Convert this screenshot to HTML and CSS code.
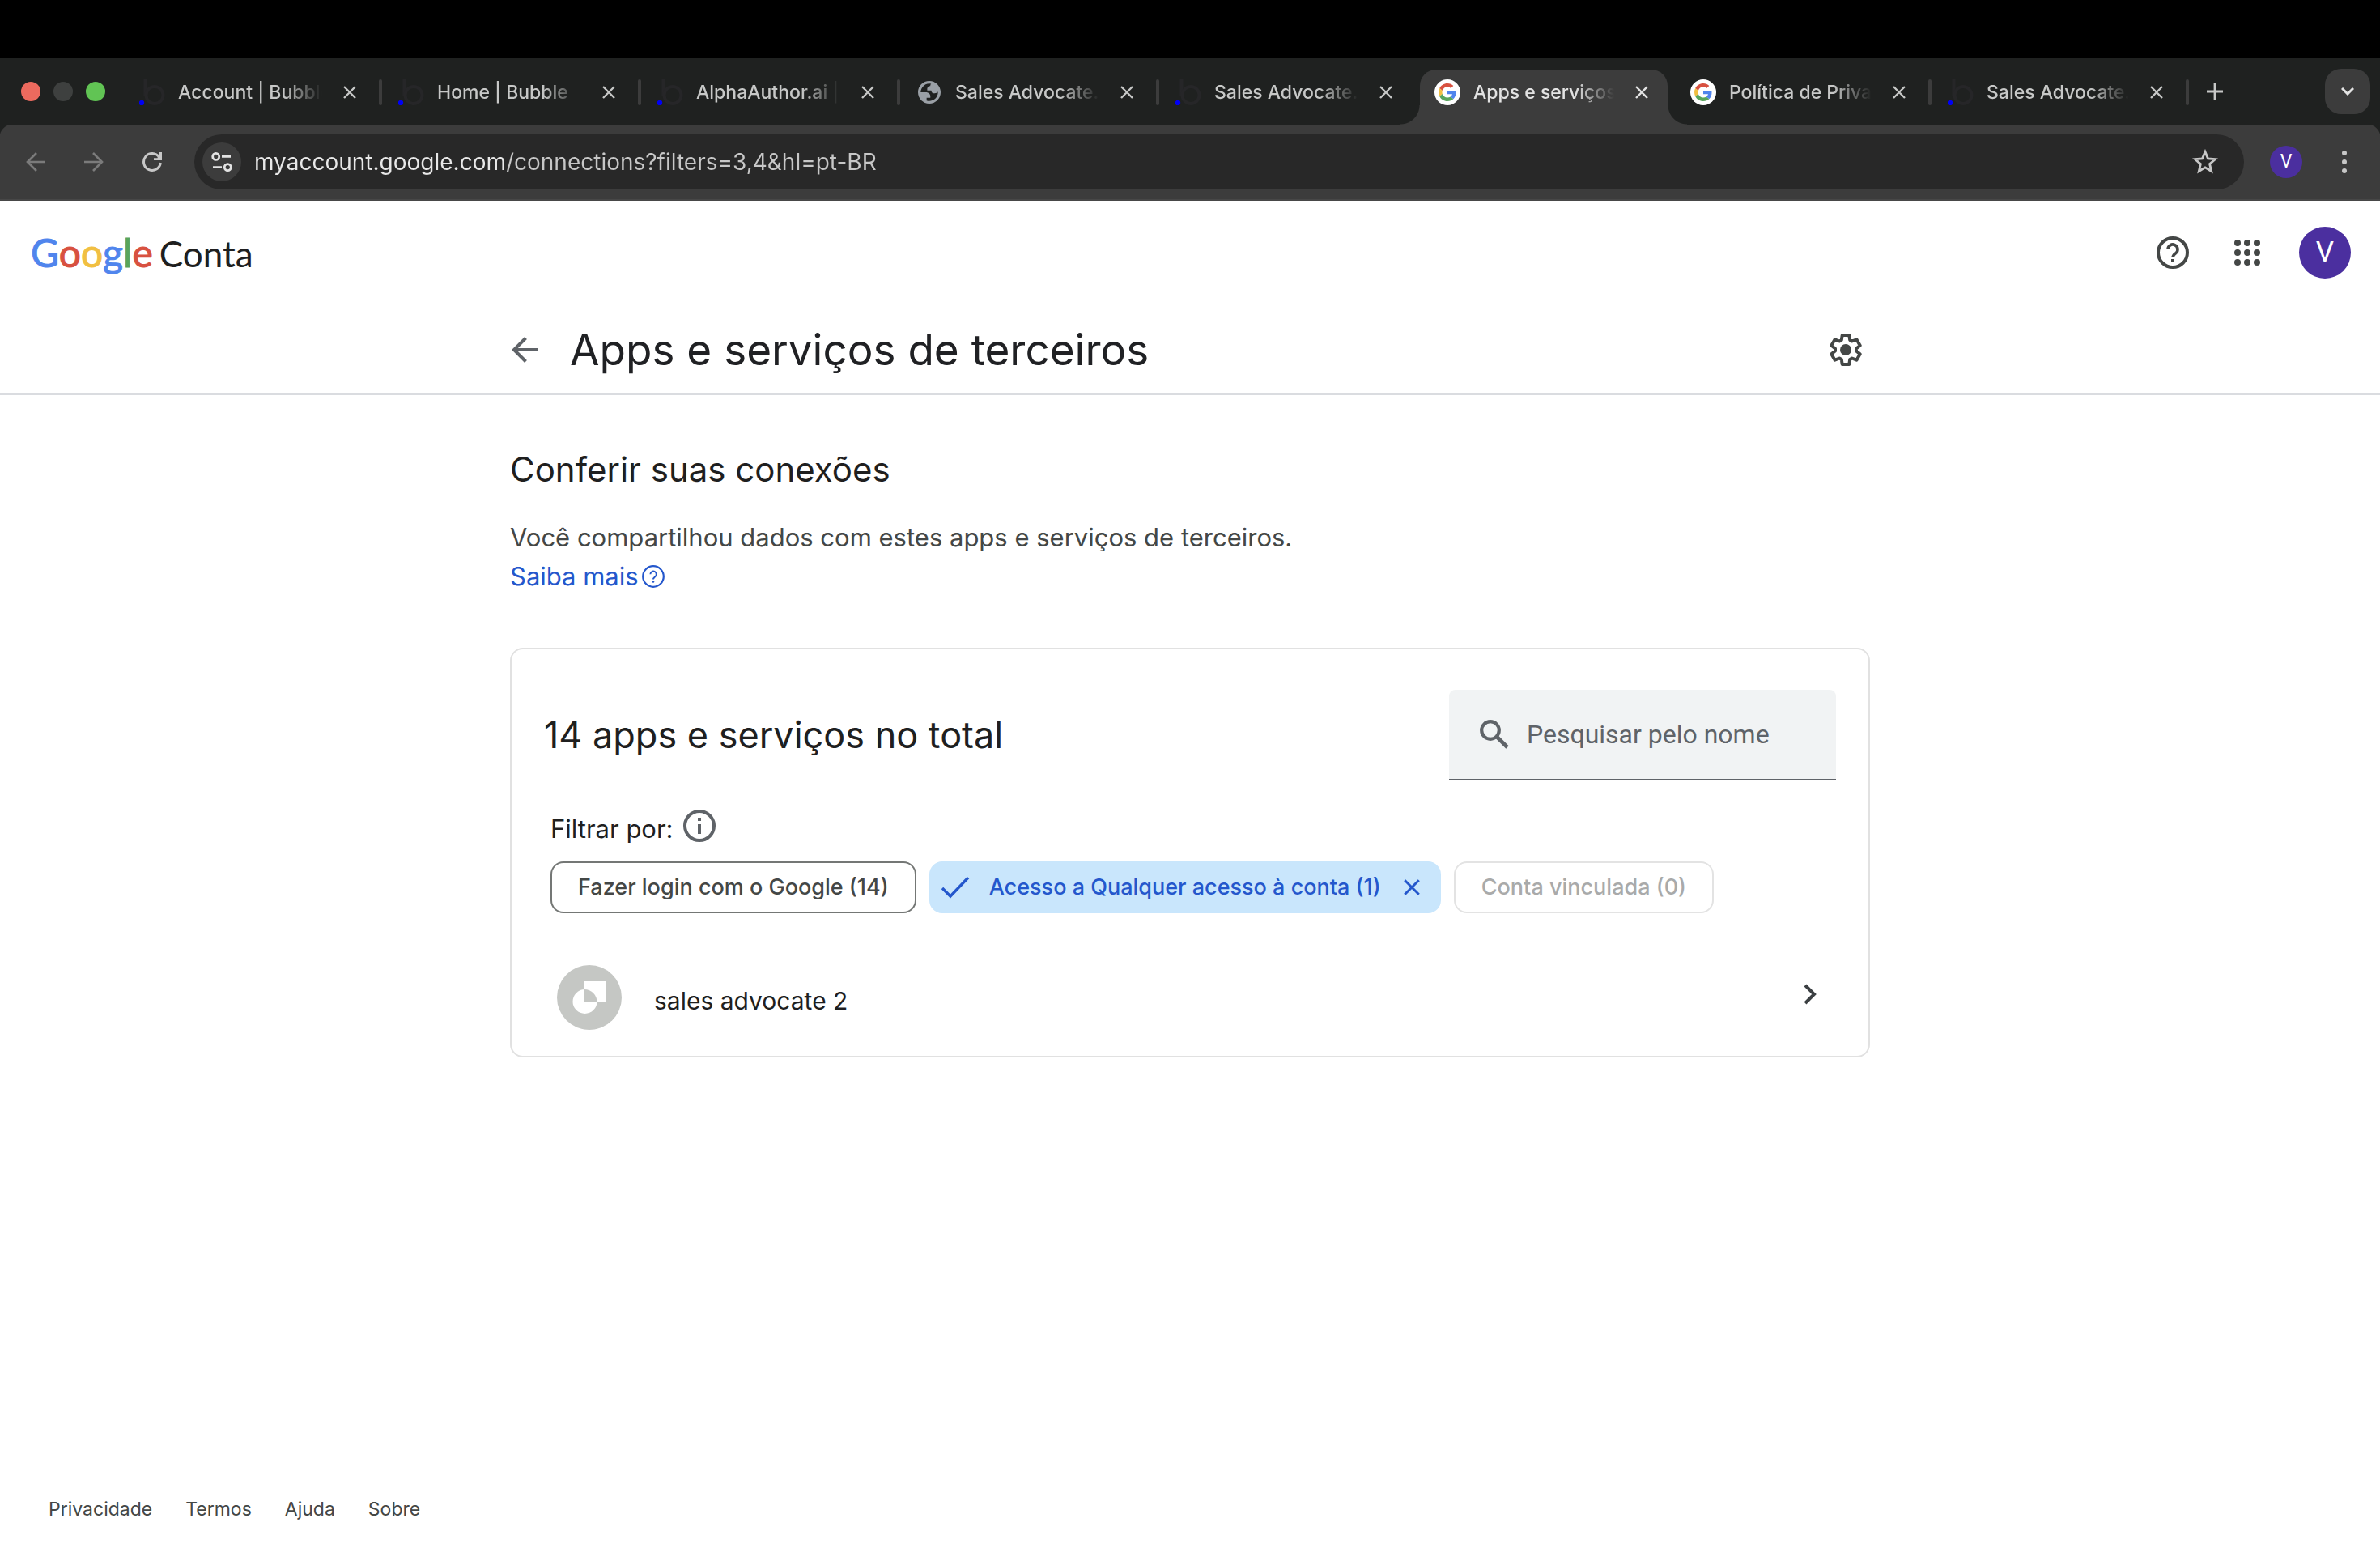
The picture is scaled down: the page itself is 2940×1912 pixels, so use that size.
FILE: index.html
```html
<!DOCTYPE html>
<html lang="pt-BR">
<head>
<meta charset="utf-8">
<meta name="viewport" content="width=device-width, initial-scale=1">
<title>Apps e serviços de terceiros</title>
<link rel="stylesheet" href="styles.css">
</head>
<body>
<svg class="sprite" aria-hidden="true">
  <symbol id="bubble" viewBox="0 0 32 32">
    <path d="M7.500 0v20" fill="none" stroke="#262628" stroke-width="4"/>
    <circle cx="19" cy="19.500" r="10.500" fill="none" stroke="#262628" stroke-width="4"/>
    <circle cx="3" cy="29" r="3.200" fill="#0000f5"/>
  </symbol>
  <symbol id="globe" viewBox="0 0 24 24">
    <path fill="#9aa0a6" fill-rule="evenodd" d="M12 1.500C6.200 1.500 1.500 6.200 1.500 12S6.200 22.500 12 22.500 22.500 17.800 22.500 12 17.800 1.500 12 1.500zM4 12h4.400c3.407.022 4.922 1.730 4.543 5.127H9.488v2.470a8.004 8.004 0 0 0 10.498-8.080C19.327 12.511 18.332 13 17 13c-2.137 0-3.206-.916-3.206-2.750h-3.748c-.274-2.728.683-4.092 2.870-4.092 0-.975.327-1.597.811-1.970A8.004 8.004 0 0 0 4 12z"/>
  </symbol>
  <symbol id="google-g" viewBox="-11 -11 70 70">
    <circle cx="24" cy="24" r="35" fill="#fff"/>
    <path fill="#d85140" d="M24 9.500c3.540 0 6.710 1.220 9.210 3.600l6.850-6.850C35.900 2.380 30.470 0 24 0 14.620 0 6.510 5.380 2.560 13.220l7.980 6.190C12.430 13.720 17.740 9.500 24 9.500z"/>
    <path fill="#5085ed" d="M46.980 24.550c0-1.570-.15-3.090-.38-4.550H24v9.020h12.940c-.58 2.960-2.260 5.480-4.780 7.180l7.730 6c4.510-4.180 7.090-10.360 7.090-17.650z"/>
    <path fill="#f1bf42" d="M10.530 28.590c-.48-1.450-.76-2.990-.76-4.590s.27-3.140.76-4.590l-7.980-6.190C.92 16.460 0 20.120 0 24c0 3.880.92 7.540 2.560 10.780l7.970-6.190z"/>
    <path fill="#58a55c" d="M24 48c6.480 0 11.930-2.130 15.890-5.810l-7.730-6c-2.150 1.450-4.920 2.300-8.160 2.300-6.260 0-11.570-4.220-13.470-9.910l-7.980 6.190C6.510 42.620 14.620 48 24 48z"/>
  </symbol>
  <symbol id="cross" viewBox="0 0 16 16">
    <path d="M1 1l14 14M15 1L1 15" fill="none" stroke="currentColor" stroke-width="2.400"/>
  </symbol>
  <symbol id="question" viewBox="0 0 40 40">
    <circle cx="20" cy="20" r="18" fill="none" stroke="currentColor" stroke-width="4"/>
    <path d="M14 16a6 6 0 1 1 9.800 4.600C21.600 22.300 20 23.400 20 26" fill="none" stroke="currentColor" stroke-width="3.600"/>
    <rect x="18" y="28" width="4" height="4" fill="currentColor"/>
  </symbol>
  <symbol id="question-thin" viewBox="0 0 28 28">
    <circle cx="14" cy="14" r="12.800" fill="none" stroke="currentColor" stroke-width="2.200"/>
    <path d="M10.400 11.300a3.700 3.700 0 1 1 6.100 2.800C15 15.300 14 16 14 17.600" fill="none" stroke="currentColor" stroke-width="1.900"/>
    <circle cx="14" cy="20.500" r="1.300" fill="currentColor"/>
  </symbol>
</svg>

<div class="screen-top"></div>
<div class="tab-strip">
  <div class="lights"><i class="light red"></i><i class="light grey"></i><i class="light green"></i></div>
  <div class="tabs">
    <div class="tab"><svg class="favicon"><use href="#bubble"/></svg><span class="tab-title">Account | Bubble</span><button class="tab-close" aria-label="Fechar"><svg><use href="#cross"/></svg></button></div>
    <div class="tab"><svg class="favicon"><use href="#bubble"/></svg><span class="tab-title">Home | Bubble</span><button class="tab-close" aria-label="Fechar"><svg><use href="#cross"/></svg></button></div>
    <div class="tab"><svg class="favicon"><use href="#bubble"/></svg><span class="tab-title">AlphaAuthor.ai |</span><button class="tab-close" aria-label="Fechar"><svg><use href="#cross"/></svg></button></div>
    <div class="tab"><svg class="favicon"><use href="#globe"/></svg><span class="tab-title">Sales Advocate.</span><button class="tab-close" aria-label="Fechar"><svg><use href="#cross"/></svg></button></div>
    <div class="tab before-active"><svg class="favicon"><use href="#bubble"/></svg><span class="tab-title">Sales Advocate.</span><button class="tab-close" aria-label="Fechar"><svg><use href="#cross"/></svg></button></div>
    <div class="tab active"><svg class="favicon"><use href="#google-g"/></svg><span class="tab-title">Apps e serviços</span><button class="tab-close" aria-label="Fechar"><svg><use href="#cross"/></svg></button></div>
    <div class="tab"><svg class="favicon"><use href="#google-g"/></svg><span class="tab-title">Política de Priva</span><button class="tab-close" aria-label="Fechar"><svg><use href="#cross"/></svg></button></div>
    <div class="tab"><svg class="favicon"><use href="#bubble"/></svg><span class="tab-title">Sales Advocate.</span><button class="tab-close" aria-label="Fechar"><svg><use href="#cross"/></svg></button></div>
  </div>
  <button class="new-tab" aria-label="Nova guia"><svg viewBox="0 0 20 20"><path d="M10 0v20M0 10h20" stroke="currentColor" stroke-width="2.800"/></svg></button>
  <button class="tab-search" aria-label="Pesquisar guias"><svg viewBox="0 0 16 10"><path d="M1 1l7 7 7-7" fill="none" stroke="currentColor" stroke-width="3"/></svg></button>
</div>

<div class="toolbar">
  <button class="nav-button dim" aria-label="Voltar"><svg viewBox="0 0 24 24"><path d="M24 12H2M13 1L2 12l11 11" fill="none" stroke="currentColor" stroke-width="2.600"/></svg></button>
  <button class="nav-button dim" aria-label="Avançar"><svg viewBox="0 0 24 24"><path d="M0 12h22M11 1l11 11-11 11" fill="none" stroke="currentColor" stroke-width="2.600"/></svg></button>
  <button class="nav-button" aria-label="Recarregar"><svg viewBox="0 0 24 24"><path d="M22.300 13A10.400 10.400 0 1 1 20.500 6" fill="none" stroke="currentColor" stroke-width="3"/><path d="M20.800 0H24v10H14V7.200h4.500z" fill="currentColor"/></svg></button>
  <div class="address">
    <button class="site-info" aria-label="Informações do site"><svg viewBox="0 0 48 48"><g fill="none" stroke="currentColor" stroke-width="2.800"><circle cx="16.700" cy="17.400" r="4"/><path d="M24 17.400h11M13 30.600h11"/><circle cx="31.300" cy="30.600" r="4"/></g></svg></button>
    <input class="url" type="text" aria-label="Endereço" value="myaccount.google.com/connections?filters=3,4&amp;hl=pt-BR">
    <button class="star" aria-label="Favoritar"><svg viewBox="0 0 32 32"><path d="M16 3.500l3.500 8.400 9 .8-6.900 5.900 2.100 8.900-7.700-4.700-7.700 4.700 2.100-8.900-6.900-5.900 9-.8z" fill="none" stroke="currentColor" stroke-width="2.800"/></svg></button>
  </div>
  <button class="profile" aria-label="Perfil">V</button>
  <button class="menu" aria-label="Menu"><svg viewBox="0 0 6 28"><g fill="currentColor"><circle cx="3" cy="3" r="3"/><circle cx="3" cy="14" r="3"/><circle cx="3" cy="25" r="3"/></g></svg></button>
</div>

<div class="page">
  <header class="account-bar">
    <a class="brand" href="#"><span class="google"><span class="b">G</span><span class="r">o</span><span class="y">o</span><span class="b">g</span><span class="g">l</span><span class="r">e</span></span><span class="conta">Conta</span></a>
    <div class="account-actions">
      <button class="help" aria-label="Ajuda"><svg><use href="#question"/></svg></button>
      <button class="apps" aria-label="Google Apps"><svg viewBox="0 0 32 32"><g fill="currentColor"><circle cx="4" cy="4" r="4"/><circle cx="16" cy="4" r="4"/><circle cx="28" cy="4" r="4"/><circle cx="4" cy="16" r="4"/><circle cx="16" cy="16" r="4"/><circle cx="28" cy="16" r="4"/><circle cx="4" cy="28" r="4"/><circle cx="16" cy="28" r="4"/><circle cx="28" cy="28" r="4"/></g></svg></button>
      <button class="avatar" aria-label="Conta do Google">V</button>
    </div>
  </header>

  <div class="title-bar">
    <div class="title-inner">
      <button class="back" aria-label="Voltar"><svg viewBox="0 0 32 32"><path d="M32 16H3M17.500 1.500L3 16l14.500 14.500" fill="none" stroke="currentColor" stroke-width="4"/></svg></button>
      <h1>Apps e serviços de terceiros</h1>
      <button class="settings" aria-label="Configurações"><svg viewBox="-20 -20 40 40"><path fill="none" stroke="currentColor" stroke-width="4" stroke-linejoin="round" d="M-4.300-18H4.300L5.200-12 7.800-10.500 13.400-12.700 17.700-5.300 13-1.500V1.500L17.700 5.300 13.400 12.700 7.800 10.500 5.200 12 4.300 18H-4.300L-5.200 12-7.800 10.500-13.400 12.700-17.700 5.300-13 1.500V-1.500L-17.700-5.300-13.400-12.700-7.800-10.500-5.200-12z"/><circle r="7" fill="currentColor"/></svg></button>
    </div>
  </div>

  <main>
    <h2 class="intro-title">Conferir suas conexões</h2>
    <p class="intro">Você compartilhou dados com estes apps e serviços de terceiros.<br><a class="learn-more" href="#">Saiba mais <svg><use href="#question-thin"/></svg></a></p>

    <section class="card">
      <div class="card-head">
        <h2>14 apps e serviços no total</h2>
        <label class="search">
          <svg viewBox="0 0 36 36"><circle cx="13" cy="13" r="10.800" fill="none" stroke="currentColor" stroke-width="4.200"/><path d="M21 21l13 13" stroke="currentColor" stroke-width="4.800"/></svg>
          <input type="text" placeholder="Pesquisar pelo nome" aria-label="Pesquisar pelo nome">
        </label>
      </div>
      <div class="filter-label">
        <span>Filtrar por:</span>
        <button class="info" aria-label="Informações"><svg viewBox="0 0 40 40"><circle cx="20" cy="20" r="18" fill="none" stroke="currentColor" stroke-width="4"/><path d="M20 18v12M20 10v4" stroke="currentColor" stroke-width="4"/></svg></button>
      </div>
      <div class="chips">
        <button class="chip">Fazer login com o Google (14)</button>
        <button class="chip selected"><svg class="check" viewBox="0 0 36 28"><path d="M2 15l10 10L34 2" fill="none" stroke="currentColor" stroke-width="3.400"/></svg><span>Acesso a Qualquer acesso à conta (1)</span><svg class="clear"><use href="#cross"/></svg></button>
        <button class="chip" disabled>Conta vinculada (0)</button>
      </div>
      <a class="app-row" href="#">
        <svg class="app-logo" viewBox="0 0 80 80"><circle cx="40" cy="40" r="40" fill="#c5c7c4"/><path fill="#fff" d="M34 20h26v26H34z"/><circle cx="34.500" cy="45" r="15" fill="#fff"/><path fill="#c5c7c4" d="M34 30a15.500 15.500 0 0 1 15.500 16H34z"/></svg>
        <span class="app-name">sales advocate 2</span>
        <svg class="chevron" viewBox="0 0 16 26"><path d="M2 2l11 11L2 24" fill="none" stroke="currentColor" stroke-width="4"/></svg>
      </a>
    </section>
  </main>

  <footer>
    <a href="#">Privacidade</a>
    <a href="#">Termos</a>
    <a href="#">Ajuda</a>
    <a href="#">Sobre</a>
  </footer>
</div>
</body>
</html>
```
FILE: styles.css
```css
* { box-sizing: border-box; }
body {
  margin: 0;
  min-height: 100vh;
  display: flex;
  flex-direction: column;
  background: #fff;
  color: #1f1f1f;
  font-family: Inter, "Liberation Sans", sans-serif;
}
button {
  display: flex;
  align-items: center;
  justify-content: center;
  padding: 0;
  border: 0;
  background: none;
  color: inherit;
  font: inherit;
}
a { color: inherit; text-decoration: none; }
h1, h2, p { margin: 0; font-weight: 400; }
svg { display: block; flex: none; }
.sprite { display: none; }

/* Browser frame */
.screen-top { height: 72px; background: #000; }
.tab-strip {
  display: flex;
  align-items: center;
  height: 82px;
  padding: 0 12px 0 26px;
  background: #1f2120;
  color: #c7c8c7;
}
.lights { display: flex; gap: 16px; margin-right: 24px; }
.light { width: 24px; height: 24px; border-radius: 50%; }
.red { background: #ec6a5e; }
.grey { background: #3e403f; }
.green { background: #61c454; }
.tabs { display: flex; flex: 0 1 2552px; min-width: 0; align-self: stretch; align-items: flex-end; }
.tab {
  position: relative;
  display: flex;
  align-items: center;
  flex: 0 1 320px;
  min-width: 0;
  height: 68px;
  padding: 0 30px 12px 18px;
}
.tab:nth-child(n+6) { flex-basis: 318px; }
.tab::after {
  content: "";
  position: absolute;
  right: 2px;
  top: 12px;
  width: 4px;
  height: 32px;
  border-radius: 2px;
  background: #3c3c3c;
}
.tab.before-active::after { display: none; }
.tab.active {
  flex-basis: 306px;
  margin-right: 10px;
  padding-right: 20px;
  border-radius: 20px 20px 0 0;
  background: #3c3c3c;
  color: #e3e3e3;
}
.tab.active::before, .tab.active::after {
  content: "";
  position: absolute;
  top: auto;
  bottom: 0;
  width: 24px;
  height: 24px;
  border-radius: 0;
}
.tab.active::before { left: -24px; background: radial-gradient(circle at 0 0, transparent 23px, #3c3c3c 24px); }
.tab.active::after { right: -24px; background: radial-gradient(circle at 100% 0, transparent 23px, #3c3c3c 24px); }
.favicon { width: 32px; height: 32px; }
.tab-title {
  flex: 1;
  min-width: 0;
  margin: 0 22px 0 16px;
  overflow: hidden;
  white-space: nowrap;
  font-size: 23px;
  font-weight: 500;
  line-height: 32px;
  -webkit-mask-image: linear-gradient(to right, #000 calc(100% - 48px), transparent);
  mask-image: linear-gradient(to right, #000 calc(100% - 48px), transparent);
}
.tab-close { width: 24px; height: 24px; }
.tab-close svg { width: 16px; height: 16px; }
.new-tab { width: 40px; height: 40px; margin-left: 10px; }
.new-tab svg { width: 20px; height: 20px; }
.tab-search {
  width: 56px;
  height: 56px;
  margin-left: auto;
  border-radius: 20px;
  background: #3c3c3c;
  color: #e3e3e3;
}
.tab-search svg { width: 16px; height: 10px; }

.toolbar {
  display: flex;
  align-items: center;
  height: 94px;
  padding: 0 24px 0 20px;
  border-bottom: 2px solid #474747;
  background: radial-gradient(circle at 16px 16px, #3c3c3c 16px, #1f2120 17px) 0 0 / 16px 16px no-repeat,
    radial-gradient(circle at 0 16px, #3c3c3c 16px, #1f2120 17px) 100% 0 / 16px 16px no-repeat, #3c3c3c;
  color: #c7c7c7;
}
.nav-button { width: 48px; height: 48px; margin-right: 24px; }
.nav-button svg { width: 24px; height: 24px; }
.dim { color: #7b7b7b; }
.address {
  display: flex;
  align-items: center;
  flex: 1;
  height: 68px;
  margin: 0 32px 0 4px;
  padding: 0 32px 0 10px;
  border-radius: 34px;
  background: #282828;
}
.site-info { width: 48px; height: 48px; border-radius: 50%; background: #3c3c3c; color: #e3e3e3; }
.site-info svg { width: 48px; height: 48px; }
.url {
  flex: 1;
  min-width: 0;
  height: 48px;
  margin-left: 16px;
  padding: 0;
  border: 0;
  outline: 0;
  background: linear-gradient(to right, #e8e8e8 310px, #c7c7c7 310px);
  -webkit-background-clip: text;
  background-clip: text;
  color: transparent;
  font: 400 28px/48px Inter, "Liberation Sans", sans-serif;
}
.star svg { width: 32px; height: 32px; }
.profile {
  width: 40px;
  height: 40px;
  margin-right: 32px;
  border-radius: 50%;
  background: #4b2f9f;
  color: #fff;
  font: 400 23px/40px Roboto, sans-serif;
}
.menu { width: 40px; height: 48px; }
.menu svg { width: 6px; height: 28px; }

/* Account page */
.page { display: flex; flex-direction: column; flex: 1; }
.account-bar {
  display: flex;
  align-items: center;
  justify-content: space-between;
  height: 128px;
  padding: 0 36px 0 38px;
}
.brand { display: flex; align-items: baseline; gap: 8px; font-family: Lato, sans-serif; line-height: 60px; }
.google { font-size: 48px; -webkit-text-stroke: 1px currentColor; }
.google span { -webkit-text-stroke: 1px currentColor; }
.conta { font-size: 44px; }
.b { color: #5085ed; }
.r { color: #d85140; }
.y { color: #f1bf42; }
.g { color: #58a55c; }
.account-actions { display: flex; align-items: center; color: #444746; }
.help svg { width: 40px; height: 40px; }
.apps { margin: 0 48px 0 56px; }
.apps svg { width: 32px; height: 32px; }
.avatar {
  width: 64px;
  height: 64px;
  border-radius: 50%;
  background: #4b2f9f;
  color: #fff;
  font: 400 35px/64px Roboto, sans-serif;
}

.title-bar { border-bottom: 2px solid #dadce0; }
.title-inner, main { width: 100%; max-width: 1680px; margin: 0 auto; }
.title-inner { display: flex; align-items: center; height: 110px; padding: 2px 10px 0 2px; }
.back { margin-right: 40px; color: #5f6368; }
.back svg { width: 32px; height: 32px; }
h1 { font-size: 53px; line-height: 64px; color: #202124; }
.settings { margin-left: auto; color: #444746; }
.settings svg { width: 40px; height: 40px; }

main { padding-top: 64px; }
.intro-title { font-size: 42px; line-height: 56px; }
.intro { margin: 32px 0 64px; color: #444746; font-size: 31px; line-height: 48px; }
.learn-more { display: inline-flex; align-items: center; gap: 4px; color: #2457cc; }
.learn-more svg { width: 28px; height: 28px; }

.card {
  padding: 50px 40px 32px;
  border: 2px solid #e1e1e1;
  border-radius: 16px;
}
.card-head { display: flex; align-items: center; justify-content: space-between; }
.card-head h2 { font-size: 45px; line-height: 56px; }
.search {
  display: flex;
  align-items: center;
  gap: 22px;
  width: 478px;
  height: 112px;
  padding: 0 24px 0 38px;
  border-bottom: 2px solid #5f6368;
  border-radius: 8px 8px 0 0;
  background: #f1f3f4;
  color: #5f6368;
}
.search svg { width: 36px; height: 36px; }
.search input {
  flex: 1;
  min-width: 0;
  padding: 0;
  border: 0;
  outline: 0;
  background: none;
  font: 400 32px/48px Roboto, sans-serif;
}
.search input::placeholder { color: #5f6368; opacity: 1; }
.filter-label {
  display: flex;
  align-items: flex-end;
  gap: 12px;
  margin: 36px 8px 24px;
  font-size: 31px;
  line-height: 32px;
}
.info { color: #5f6368; }
.info svg { width: 40px; height: 40px; }
.chips { display: flex; gap: 16px; margin: 0 8px; }
.chip {
  height: 64px;
  padding: 0 32px;
  border: 2px solid #747775;
  border-radius: 16px;
  color: #444746;
  font-size: 27px;
  font-weight: 500;
  line-height: 32px;
}
.chip:disabled { border-color: #e3e3e3; color: #a9aaaa; }
.chip.selected {
  gap: 24px;
  padding: 0 24px 0 12px;
  border-color: #c9e6fc;
  background: #c9e6fc;
  color: #2457cc;
}
.check { width: 36px; height: 28px; }
.clear { width: 20px; height: 20px; margin-left: 4px; }
.app-row { display: flex; align-items: center; gap: 40px; margin-top: 64px; padding: 0 24px 0 16px; }
.app-logo { width: 80px; height: 80px; }
.app-name { flex: 1; padding-top: 8px; font-size: 30px; line-height: 40px; }
.chevron { width: 16px; height: 26px; margin-bottom: 8px; color: #3c4043; }

footer {
  display: flex;
  gap: 41px;
  margin-top: auto;
  padding: 0 60px 32px;
  color: #444746;
  font-size: 23px;
  line-height: 32px;
}
```
